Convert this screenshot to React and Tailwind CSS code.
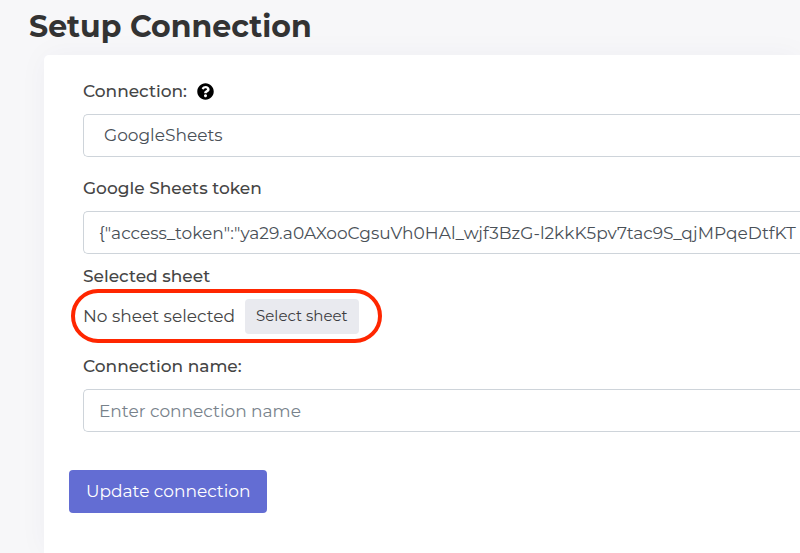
import React from 'react'
import { FaQuestionCircle } from 'react-icons/fa'

const labelClass = 'block text-[17px] leading-6 font-medium text-[#454545]'
const fieldClass =
  'block w-full h-[43px] rounded-l-[5px] border border-r-0 border-[#ced4da] bg-white text-[17px] text-[#495057] outline-none'

export default function App() {
  const token =
    '{"access_token":"ya29.a0AXooCgsuVh0HAl_wjf3BzG-l2kkK5pv7tac9S_qjMPqeDtfKT'

  return (
    <main className="flex min-h-screen flex-col overflow-hidden bg-[#f7f7f9] font-['Montserrat','Inter',sans-serif]">
      <h1 className="pt-1 pb-[5px] pl-[29px] text-3xl leading-[46px] font-bold text-[#333333]">
        Setup Connection
      </h1>

      <form
        className="ml-11 flex-1 rounded-tl-[5px] bg-white pt-6 pb-10 pl-[25px] shadow-[0_0_30px_rgba(60,60,90,0.04)]"
        onSubmit={(e) => e.preventDefault()}
      >
        <div className="pl-[14px]">
          <div className="flex items-center gap-[10px]">
            <label htmlFor="connection" className={labelClass}>
              Connection:
            </label>
            <FaQuestionCircle size={17} className="text-black" />
          </div>
          <select
            id="connection"
            defaultValue="GoogleSheets"
            className={`${fieldClass} mt-[11px] appearance-none pl-5`}
          >
            <option>GoogleSheets</option>
          </select>

          <label htmlFor="token" className={`${labelClass} mt-[19px]`}>
            Google Sheets token
          </label>
          <input
            id="token"
            type="text"
            defaultValue={token}
            className={`${fieldClass} mt-[11px] pl-[15px]`}
          />

          <p className={`${labelClass} mt-[10px]`}>Selected sheet</p>
          <div className="relative mt-[11px] flex items-center gap-[10px]">
            <span className="text-[17px] text-[#454545]">No sheet selected</span>
            <button
              type="button"
              className="h-[35px] rounded bg-[#e9eaef] px-[11px] text-[15px] text-[#3c3c40]"
            >
              Select sheet
            </button>
            {/* highlight around the sheet picker */}
            <div className="pointer-events-none absolute -top-[10px] -left-3 h-[54px] w-[311px] rounded-[27px] border-4 border-[#ff2600]" />
          </div>

          <label htmlFor="name" className={`${labelClass} mt-5`}>
            Connection name:
          </label>
          <input
            id="name"
            type="text"
            placeholder="Enter connection name"
            className={`${fieldClass} mt-[11px] pl-[15px] placeholder:text-[#78828b]`}
          />
        </div>

        <button
          type="submit"
          className="mt-[38px] h-[43px] rounded bg-[#636dd3] px-[17px] text-[17px] text-white"
        >
          Update connection
        </button>
      </form>
    </main>
  )
}
